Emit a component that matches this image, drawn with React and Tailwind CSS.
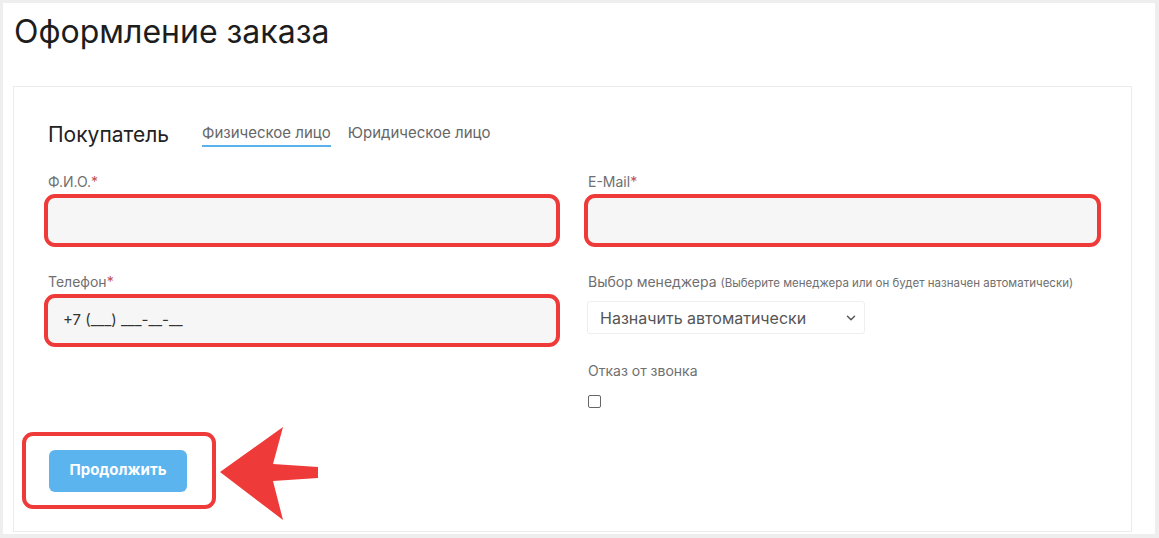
import { ChevronDown } from "lucide-react";

const Label = ({ children, star }) => (
  <div className="pl-1 text-[14px] leading-[16px] text-[#6f6f6f]">
    {children}
    {star && <span className="text-[#c0504d]">*</span>}
  </div>
);

const Field = ({ value }) => (
  <div className="mt-[4px] h-[53px] rounded-[11px] border-[4px] border-[#ef3a3a] bg-[#f6f6f6] flex items-center pl-[15px] text-[15px] text-[#333]">
    {value}
  </div>
);

export default function App() {
  return (
    <div
      className="w-[1159px] h-[538px] bg-[#eeeeee] pt-[3px] pl-[3px] pr-[4px] pb-[4px]"
      style={{ fontFamily: "Inter, 'Liberation Sans', sans-serif" }}
    >
      <div className="h-full bg-white pl-[10px] pr-[23px] pt-[10px] pb-[2px] flex flex-col">
        {/* Title */}
        <h1 className="text-[32px] leading-[38px] text-[#1d1d1d] pl-[1px] mb-[35px]">
          Оформление заказа
        </h1>

        {/* Card */}
        <div className="flex-1 border border-[#ececec] pl-[30px] pr-[29px] pt-[35px]">
          {/* Buyer header */}
          <div className="flex items-end pl-1 gap-[33px]">
            <div className="text-[21px] leading-[25px] text-[#222]">Покупатель</div>
            <div className="flex gap-[17px] text-[15px] text-[#666]">
              <span className="pb-[3px] border-b-2 border-[#5ab2ec] leading-[18px]">Физическое лицо</span>
              <span className="pb-[3px] leading-[18px]">Юридическое лицо</span>
            </div>
          </div>

          <div className="grid grid-cols-[516px_517px] gap-x-[24px] mt-[27px]">
            {/* Left column */}
            <div className="flex flex-col">
              <Label star>Ф.И.О.</Label>
              <Field />
              <div className="mt-[27px]">
                <Label star>Телефон</Label>
              </div>
              <Field value="+7 (___) ___-__-__" />

              {/* Continue */}
              <div className="flex items-start mt-[85px] -ml-[22px]">
                <div className="w-[194px] h-[77px] rounded-[11px] border-[4px] border-[#ef3a3a] flex items-center pl-[23px]">
                  <button className="w-[138px] h-[42px] rounded-[6px] bg-[#5cb4ef] text-white text-[15px] font-bold">
                    Продолжить
                  </button>
                </div>
                <svg width="104" height="96" viewBox="0 0 104 96" className="ml-[1px] -mt-[5px]">
                  <polygon
                    points="3,45 66,0 56,37 101,40 101,51 56,54 66,93"
                    fill="#ef3a3a"
                  />
                </svg>
              </div>
            </div>

            {/* Right column */}
            <div className="flex flex-col">
              <Label star>E-Mail</Label>
              <Field />
              <div className="mt-[27px] pl-1 text-[14px] leading-[16px] text-[#6f6f6f]">
                Выбор менеджера{" "}
                <span className="text-[11.5px]">(Выберите менеджера или он будет назначен автоматически)</span>
              </div>
              <div className="mt-[10px] ml-[3px] w-[278px] h-[33px] border border-[#eeeeee] rounded-[3px] flex items-center justify-between pl-[12px] pr-[6px] text-[16px] text-[#555]">
                <span>Назначить автоматически</span>
                <ChevronDown className="w-[14px] h-[14px] text-[#555]" strokeWidth={2.5} />
              </div>
              <div className="mt-[29px] pl-1 text-[14px] leading-[16px] text-[#6f6f6f]">
                Отказ от звонка
              </div>
              <div className="mt-[16px] ml-1 w-[13px] h-[13px] rounded-[2px] border border-[#666] bg-white" />
            </div>
          </div>
        </div>
      </div>
    </div>
  );
}
